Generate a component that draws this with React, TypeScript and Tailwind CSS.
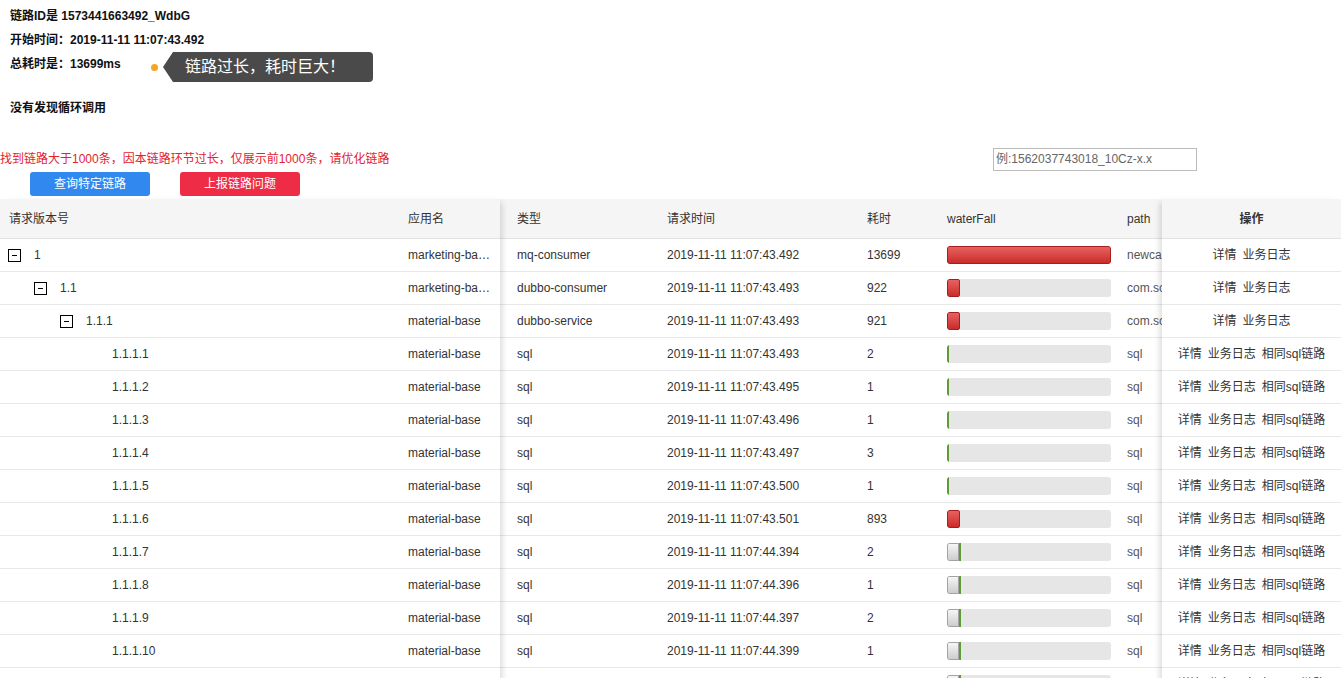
import React from 'react'

type Row = {
  ver: string
  level: number
  toggle: boolean
  app: string
  type: string
  time: string
  offset: number
  cost: number
  path: string
  sql: boolean
}

const TOTAL = 13699
const TRACK = 164

const rows: Row[] = [
  { ver: '1', level: 0, toggle: true, app: 'marketing-ba…', type: 'mq-consumer', time: '2019-11-11 11:07:43.492', offset: 0, cost: 13699, path: 'newcampaign.consumer.topic', sql: false },
  { ver: '1.1', level: 1, toggle: true, app: 'marketing-ba…', type: 'dubbo-consumer', time: '2019-11-11 11:07:43.493', offset: 1, cost: 922, path: 'com.sc.material.api.Service', sql: false },
  { ver: '1.1.1', level: 2, toggle: true, app: 'material-base', type: 'dubbo-service', time: '2019-11-11 11:07:43.493', offset: 1, cost: 921, path: 'com.sc.material.api.Service', sql: false },
  { ver: '1.1.1.1', level: 3, toggle: false, app: 'material-base', type: 'sql', time: '2019-11-11 11:07:43.493', offset: 1, cost: 2, path: 'sql', sql: true },
  { ver: '1.1.1.2', level: 3, toggle: false, app: 'material-base', type: 'sql', time: '2019-11-11 11:07:43.495', offset: 3, cost: 1, path: 'sql', sql: true },
  { ver: '1.1.1.3', level: 3, toggle: false, app: 'material-base', type: 'sql', time: '2019-11-11 11:07:43.496', offset: 4, cost: 1, path: 'sql', sql: true },
  { ver: '1.1.1.4', level: 3, toggle: false, app: 'material-base', type: 'sql', time: '2019-11-11 11:07:43.497', offset: 5, cost: 3, path: 'sql', sql: true },
  { ver: '1.1.1.5', level: 3, toggle: false, app: 'material-base', type: 'sql', time: '2019-11-11 11:07:43.500', offset: 8, cost: 1, path: 'sql', sql: true },
  { ver: '1.1.1.6', level: 3, toggle: false, app: 'material-base', type: 'sql', time: '2019-11-11 11:07:43.501', offset: 9, cost: 893, path: 'sql', sql: true },
  { ver: '1.1.1.7', level: 3, toggle: false, app: 'material-base', type: 'sql', time: '2019-11-11 11:07:44.394', offset: 902, cost: 2, path: 'sql', sql: true },
  { ver: '1.1.1.8', level: 3, toggle: false, app: 'material-base', type: 'sql', time: '2019-11-11 11:07:44.396', offset: 904, cost: 1, path: 'sql', sql: true },
  { ver: '1.1.1.9', level: 3, toggle: false, app: 'material-base', type: 'sql', time: '2019-11-11 11:07:44.397', offset: 905, cost: 2, path: 'sql', sql: true },
  { ver: '1.1.1.10', level: 3, toggle: false, app: 'material-base', type: 'sql', time: '2019-11-11 11:07:44.399', offset: 907, cost: 1, path: 'sql', sql: true },
  { ver: '1.1.1.11', level: 3, toggle: false, app: 'material-base', type: 'sql', time: '2019-11-11 11:07:44.401', offset: 909, cost: 1, path: 'sql', sql: true },
]

function WaterFall({ offset, cost }: { offset: number; cost: number }) {
  const off = (offset * TRACK) / TOTAL
  const big = cost > 300
  const w = big ? Math.max((cost * TRACK) / TOTAL, 13) : 2
  return (
    <div className="flex h-[18px] w-[164px] overflow-hidden rounded-[3px] bg-[#e6e6e6]">
      {off > 1 && (
        <div
          className="h-full rounded-l-[2px] border border-[#a3a3a3] bg-gradient-to-b from-[#f6f6f6] to-[#cdcdcd]"
          style={{ width: off + 1 }}
        />
      )}
      {big ? (
        <div
          className="h-full rounded-[2px] border border-[#a51e1e] bg-gradient-to-b from-[#e8605f] to-[#c92a2a]"
          style={{ width: w }}
        />
      ) : (
        <div className="h-full w-[2px] bg-[#5f9b35]" />
      )}
    </div>
  )
}

const cell = 'h-[33px] border-b border-[#e8e8e8] flex items-center'

export default function App() {
  return (
    <div className="h-[678px] overflow-hidden bg-white text-[12px] text-[#333] font-['Liberation_Sans','Noto_Sans_CJK_SC',sans-serif]">
      {/* summary */}
      <div className="pt-[4px] pl-[10px] font-bold text-[#111]">
        <div className="h-[24px] leading-[24px]">链路ID是 1573441663492_WdbG</div>
        <div className="h-[24px] leading-[24px]">开始时间：2019-11-11 11:07:43.492</div>
        <div className="relative h-[24px] leading-[24px]">
          总耗时是：13699ms
          <div className="absolute left-[141px] top-[0px] flex items-center">
            <span className="h-[7px] w-[7px] rounded-full bg-[#f5a623]" />
            <span className="ml-[5px] h-0 w-0 border-y-[15px] border-r-[10px] border-y-transparent border-r-[#4a4a4a]" />
            <span className="flex h-[30px] w-[200px] items-center rounded-r-[4px] bg-[#4a4a4a] pl-[12px] text-[16px] font-normal text-white">
              链路过长，耗时巨大！
            </span>
          </div>
        </div>
        <div className="mt-[20px] h-[24px] leading-[24px]">没有发现循环调用</div>
      </div>

      <div className="mt-[27px] flex h-[24px] items-center justify-between pr-[144px]">
        <span className="text-[#e3232f]">找到链路大于1000条，因本链路环节过长，仅展示前1000条，请优化链路</span>
        <input
          className="h-[23px] w-[204px] border border-[#bcbcbc] px-[2px] text-[12px] text-[#333] placeholder:text-[#666] outline-none"
          placeholder="例:1562037743018_10Cz-x.x"
        />
      </div>

      <div className="mt-[1px] flex gap-[30px] pl-[30px]">
        <button className="h-[24px] w-[120px] rounded-[3px] bg-[#3189ef] text-white">查询特定链路</button>
        <button className="h-[24px] w-[120px] rounded-[3px] bg-[#ee2c45] text-white">上报链路问题</button>
      </div>

      {/* table */}
      <div className="mt-[3px] flex">
        {/* left fixed */}
        <div className="relative z-10 w-[500px] shrink-0 bg-white shadow-[5px_0_6px_-3px_rgba(0,0,0,0.15)]">
          <div className="flex h-[40px] items-center border-b border-[#e2e2e2] bg-[#f5f5f5]">
            <div className="w-[400px] pl-[9px]">请求版本号</div>
            <div className="w-[100px] pl-[8px]">应用名</div>
          </div>
          {rows.map((r) => (
            <div key={r.ver} className={cell}>
              <div className="flex w-[400px] items-center" style={{ paddingLeft: 8 + r.level * 26 }}>
                {r.toggle ? (
                  <span className="flex h-[13px] w-[13px] items-center justify-center border border-black">
                    <span className="h-[1px] w-[5px] bg-black" />
                  </span>
                ) : (
                  <span className="w-[13px]" />
                )}
                <span className="ml-[13px]">{r.ver}</span>
              </div>
              <div className="w-[100px] truncate pl-[8px]">{r.app}</div>
            </div>
          ))}
        </div>

        {/* scroll middle */}
        <div className="min-w-0 flex-1 overflow-hidden">
          <div className="flex h-[40px] items-center border-b border-[#e2e2e2] bg-[#f5f5f5]">
            <div className="w-[150px] shrink-0 pl-[17px]">类型</div>
            <div className="w-[200px] shrink-0 pl-[17px]">请求时间</div>
            <div className="w-[80px] shrink-0 pl-[17px]">耗时</div>
            <div className="w-[180px] shrink-0 pl-[17px]">waterFall</div>
            <div className="min-w-0 flex-1 overflow-hidden whitespace-nowrap pl-[17px]">path</div>
          </div>
          {rows.map((r) => (
            <div key={r.ver} className={cell}>
              <div className="w-[150px] shrink-0 pl-[17px]">{r.type}</div>
              <div className="w-[200px] shrink-0 pl-[17px]">{r.time}</div>
              <div className="w-[80px] shrink-0 pl-[17px]">{r.cost}</div>
              <div className="w-[180px] shrink-0 pl-[17px]">
                <WaterFall offset={r.offset} cost={r.cost} />
              </div>
              <div className="min-w-0 flex-1 overflow-hidden whitespace-nowrap pl-[17px] text-[#555]">{r.path}</div>
            </div>
          ))}
        </div>

        {/* right fixed */}
        <div className="relative z-10 w-[179px] shrink-0 bg-white shadow-[-5px_0_6px_-3px_rgba(0,0,0,0.15)]">
          <div className="flex h-[40px] items-center justify-center border-b border-[#e2e2e2] bg-[#f5f5f5] font-bold">
            操作
          </div>
          {rows.map((r) => (
            <div key={r.ver} className={cell + ' justify-center gap-[6px] whitespace-nowrap'}>
              <span>详情</span>
              <span>业务日志</span>
              {r.sql && <span>相同sql链路</span>}
            </div>
          ))}
        </div>
      </div>
    </div>
  )
}
